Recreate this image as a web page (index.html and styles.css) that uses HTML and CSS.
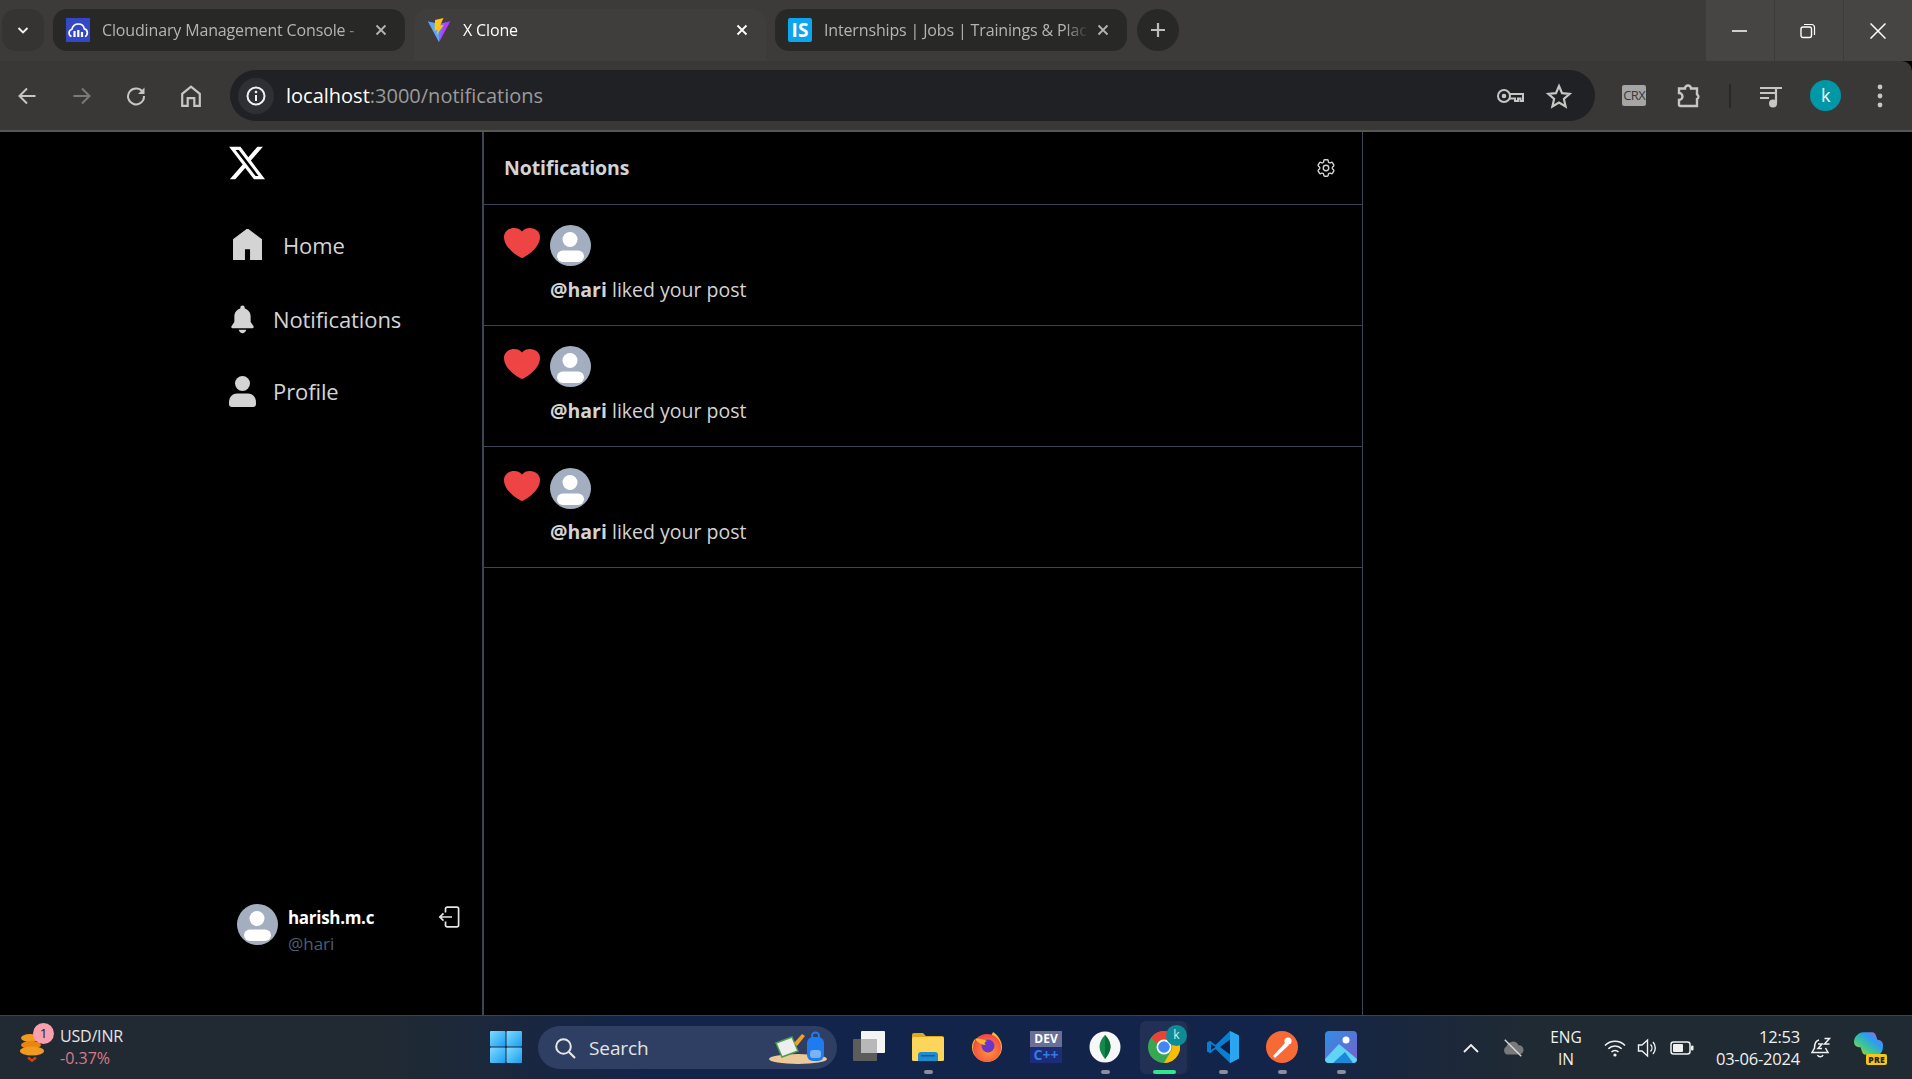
FILE: index.html
```html
<!DOCTYPE html>
<html lang="en">
<head>
<meta charset="utf-8">
<title>X Clone</title>
<link rel="stylesheet" href="styles.css">
</head>
<body>
<svg class="defs" width="0" height="0">
  <symbol id="avatar" viewBox="0 0 41 41"><circle cx="20.5" cy="20.5" r="20.5" fill="#a3afc0"/><circle cx="20" cy="14.5" r="7.5" fill="#fff"/><rect x="7" y="25.5" width="27" height="11.5" rx="5.7" fill="#fff"/></symbol>
  <symbol id="heart" viewBox="2.25 3 19.5 18" preserveAspectRatio="none"><path fill="#ef4444" d="m11.645 20.91-.007-.003-.022-.012a15.247 15.247 0 0 1-.383-.218 25.18 25.18 0 0 1-4.244-3.17C4.688 15.36 2.25 12.174 2.25 8.25 2.25 5.322 4.714 3 7.688 3A5.5 5.5 0 0 1 12 5.052 5.5 5.5 0 0 1 16.313 3c2.973 0 5.437 2.322 5.437 5.25 0 3.925-2.438 7.111-4.739 9.256a25.175 25.175 0 0 1-4.244 3.17 15.247 15.247 0 0 1-.383.219l-.022.012-.007.004-.003.001a.752.752 0 0 1-.704 0l-.003-.001Z"/></symbol>
  <symbol id="close" viewBox="0 0 12 12"><path d="M1.5 1.5l9 9M10.5 1.5l-9 9" fill="none" stroke="currentColor" stroke-width="1.8"/></symbol>
</svg>

<header class="chrome">
  <div class="tabstrip">
    <div class="tab-search"><svg class="ic12" viewBox="0 0 12 12"><path d="M1.5 4l4.5 4.5L10.5 4" fill="none" stroke="#f2f2f2" stroke-width="1.9"/></svg></div>
    <div class="tab">
      <svg class="favicon" viewBox="0 0 24 24"><rect width="24" height="24" fill="#3448c5"/><path d="M5.5 18.5c-3-1-3.6-6 .4-7.300C6.700 7.800 9.500 6 12.500 6c3 0 5.200 2 5.800 4.800 3.700.6 4 6.300.7 7.700" fill="none" stroke="#fff" stroke-width="1.700"/><path d="M8.500 13v6M12.300 12v7M16 14v5" stroke="#fff" stroke-width="2.200"/></svg>
      <span class="tab-title">Cloudinary Management Console -</span>
      <svg class="tab-x" width="12" height="12"><use href="#close"/></svg>
    </div>
    <div class="tab tab-active">
      <svg class="favicon" viewBox="0 0 24 24"><path d="M1 3.500L12 24 23 3.500 12 6z" fill="#7f6cf6"/><path d="M1 3.500L12 24V6z" fill="#5aa7f5"/><path d="M12 24l11-20.500-5 1z" fill="#bd34fe"/><path d="M16.500 0L8 2l-.5 10.500 3-.5-.8 5 7-10-3.500.5z" fill="#ffc517"/></svg>
      <span class="tab-title">X Clone</span>
      <svg class="tab-x" width="12" height="12"><use href="#close"/></svg>
    </div>
    <div class="tab">
      <span class="favicon is-icon">IS</span>
      <span class="tab-title">Internships | Jobs | Trainings &amp; Plac</span>
      <svg class="tab-x" width="12" height="12"><use href="#close"/></svg>
    </div>
    <div class="tab-new"><svg class="ic16" viewBox="0 0 16 16"><path d="M8 1v14M1 8h14" stroke="#bdbdbb" stroke-width="2.200"/></svg></div>
    <div class="winctl">
      <div class="winbtn"><svg class="ic16" viewBox="0 0 16 16"><path d="M0 8h15" stroke="#fff" stroke-width="1.500"/></svg></div>
      <div class="winbtn winbtn-restore"><svg class="ic16" viewBox="0 0 16 16"><rect x="1" y="4" width="10.500" height="10.500" rx="2" fill="none" stroke="#fff" stroke-width="1.400"/><path d="M4 1.500h7.500a3 3 0 0 1 3 3V12" fill="none" stroke="#fff" stroke-width="1.200"/></svg></div>
      <div class="winbtn"><svg class="ic16" viewBox="0 0 16 16"><path d="M.5.500l15 15M15.500.500l-15 15" stroke="#fff" stroke-width="1.500"/></svg></div>
    </div>
  </div>
  <div class="toolbar">
    <div class="tool"><svg class="ic20" viewBox="0 0 20 20"><path d="M18.500 10H2.500M10 2.500L2.500 10l7.500 7.500" fill="none" stroke="#c6c6c4" stroke-width="2"/></svg></div>
    <div class="tool"><svg class="ic20" viewBox="0 0 20 20"><path d="M1.500 10h16M10 2.500l7.500 7.500-7.500 7.500" fill="none" stroke="#7a7a78" stroke-width="2"/></svg></div>
    <div class="tool"><svg class="ic20" viewBox="0 0 20 20"><path d="M17 6.500A8 8 0 1 0 18 10" fill="none" stroke="#c6c6c4" stroke-width="2"/><path d="M18.500 1.500v6.500H12z" fill="#c6c6c4"/></svg></div>
    <div class="tool"><svg class="ic22" viewBox="0 0 20 20"><path d="M2 19V8l8-6.500L18 8v11h-5v-7H7v7z" fill="none" stroke="#c6c6c4" stroke-width="2"/></svg></div>
    <div class="omnibox">
      <div class="info"><svg class="ic20" viewBox="0 0 20 20"><circle cx="10" cy="10" r="8.500" fill="none" stroke="#f2f2f2" stroke-width="2"/><path d="M10 9v6" stroke="#f2f2f2" stroke-width="2"/><circle cx="10" cy="6" r="1.300" fill="#f2f2f2"/></svg></div>
      <div class="url"><span class="url-host">localhost</span>:3000/notifications</div>
      <div class="omni-end">
        <div class="omni-btn"><svg class="key" viewBox="0 0 28 16"><circle cx="8" cy="8" r="6" fill="none" stroke="#c6c6c4" stroke-width="2"/><circle cx="8" cy="8" r="2.300" fill="#c6c6c4"/><path d="M14 6h13v7h-2.500v-2.500H22V13h-3v-2.500h-5" fill="none" stroke="#c6c6c4" stroke-width="2"/></svg></div>
        <div class="omni-btn"><svg class="ic26" viewBox="0 0 24 24"><path d="M12 2.800l2.800 6.600 7.100.6-5.400 4.700 1.600 7-6.100-3.700-6.100 3.700 1.600-7L2.100 10l7.100-.6z" fill="none" stroke="#c6c6c4" stroke-width="2"/></svg></div>
      </div>
    </div>
    <div class="tool tool-first"><span class="crx">CRX</span></div>
    <div class="tool"><svg class="ic26" viewBox="0 0 26 26"><path d="M3 5.500h6a3 3 0 0 1 6 0h6v6a2.500 2.500 0 0 1 0 4.500v7H4.500a1.500 1.500 0 0 1-1.500-1.500V17a3.500 3.500 0 0 0 0-7z" fill="none" stroke="#c6c6c4" stroke-width="2.400"/></svg></div>
    <div class="tool-sep"></div>
    <div class="tool"><svg class="ic26" viewBox="0 0 26 26"><path d="M2 5h15M2 10h15M2 15h9" stroke="#c6c6c4" stroke-width="2"/><path d="M18 20V5h6" fill="none" stroke="#c6c6c4" stroke-width="2.200"/><circle cx="15" cy="20.500" r="4" fill="#c6c6c4"/></svg></div>
    <div class="tool"><span class="profile">k</span></div>
    <div class="tool"><svg class="dots" viewBox="0 0 6 24"><circle cx="3" cy="3" r="2.400" fill="#c6c6c4"/><circle cx="3" cy="12" r="2.400" fill="#c6c6c4"/><circle cx="3" cy="21" r="2.400" fill="#c6c6c4"/></svg></div>
  </div>
</header>

<main class="page">
  <aside class="sidebar">
    <svg class="x-logo" viewBox="1.2 2.2 21.600 19.600"><path fill="#fff" d="M18.244 2.250h3.308l-7.227 8.260 8.502 11.240H16.170l-5.214-6.817L4.990 21.750H1.680l7.730-8.835L1.254 2.250H8.080l4.713 6.231zm-1.161 17.520h1.833L7.084 4.126H5.117z"/></svg>
    <nav class="nav">
      <a class="nav-item nav-home"><svg class="nav-home-icon" viewBox="0 0 28 30"><path fill="#d4d4d4" d="M14 0L0 10.500V30h11V19h6v11h11V10.500z" stroke="#d4d4d4" stroke-linejoin="round"/></svg><span>Home</span></a>
      <a class="nav-item nav-bell"><svg class="nav-bell-icon" viewBox="0 0 24 29"><path fill="#d4d4d4" d="M12 0a2.300 2.300 0 0 0-2.300 2.300v.6C5.900 4 3.500 7.300 3.500 11v6L.5 21.500a1.300 1.300 0 0 0 1 2h21a1.300 1.300 0 0 0 1-2L20.500 17v-6c0-3.700-2.400-7-6.200-8.100v-.6A2.300 2.300 0 0 0 12 0zM8 25.300h8c-.8 2.300-2.200 3.500-4 3.500s-3.200-1.200-4-3.500z"/></svg><span class="nav-label">Notifications</span></a>
      <a class="nav-item nav-profile"><svg class="nav-profile-icon" viewBox="0 0 27 31"><circle cx="13.500" cy="7.500" r="7.500" fill="#d4d4d4"/><path fill="#d4d4d4" d="M0 26.500C0 20.500 4 17.500 8 17.500h11c4 0 8 3 8 9V28a3 3 0 0 1-3 3H3a3 3 0 0 1-3-3z"/></svg><span class="nav-label">Profile</span></a>
    </nav>
    <div class="me">
      <svg class="avatar"><use href="#avatar"/></svg>
      <div class="me-text">
        <div class="me-name">harish.m.c</div>
        <div class="me-handle">@hari</div>
      </div>
      <svg class="logout" viewBox="0 0 22 22"><path d="M7.500 6.500V3a1.800 1.800 0 0 1 1.800-1.800h9.500A1.800 1.800 0 0 1 20.600 3v16a1.800 1.800 0 0 1-1.800 1.800H9.300A1.800 1.800 0 0 1 7.500 19v-3.500M14 11H2M5.500 7.300L1.800 11l3.700 3.700" fill="none" stroke="#e5e5e5" stroke-width="1.700"/></svg>
    </div>
  </aside>

  <section class="feed">
    <div class="feed-head">
      <h1 class="feed-title">Notifications</h1>
      <svg class="gear" viewBox="0 0 24 24"><path fill="none" stroke="#d4d4d4" stroke-width="1.500" d="M9.594 3.940c.09-.542.56-.94 1.110-.94h2.593c.55 0 1.020.398 1.110.94l.213 1.281c.063.374.313.686.645.870.074.040.147.083.220.127.325.196.720.257 1.075.124l1.217-.456a1.125 1.125 0 0 1 1.370.490l1.296 2.247a1.125 1.125 0 0 1-.260 1.431l-1.003.827c-.293.241-.438.613-.430.992a7.723 7.723 0 0 1 0 .255c-.008.378.137.750.430.991l1.004.827c.424.350.534.955.260 1.430l-1.298 2.247a1.125 1.125 0 0 1-1.369.491l-1.217-.456c-.355-.133-.750-.072-1.076.124a6.470 6.470 0 0 1-.220.128c-.331.183-.581.495-.644.869l-.213 1.281c-.090.543-.560.940-1.110.940h-2.594c-.550 0-1.019-.398-1.110-.940l-.213-1.281c-.062-.374-.312-.686-.644-.870a6.520 6.520 0 0 1-.220-.127c-.325-.196-.720-.257-1.076-.124l-1.217.456a1.125 1.125 0 0 1-1.369-.490l-1.297-2.247a1.125 1.125 0 0 1 .260-1.431l1.004-.827c.292-.240.437-.613.430-.991a6.932 6.932 0 0 1 0-.255c.007-.380-.138-.751-.430-.992l-1.004-.827a1.125 1.125 0 0 1-.260-1.430l1.297-2.247a1.125 1.125 0 0 1 1.370-.491l1.216.456c.356.133.751.072 1.076-.124.072-.044.146-.086.220-.128.332-.183.582-.495.644-.869l.214-1.280Z"/><circle cx="12" cy="12" r="3" fill="none" stroke="#d4d4d4" stroke-width="1.500"/></svg>
    </div>
    <article class="note">
      <svg class="heart"><use href="#heart"/></svg>
      <div class="note-body"><svg class="avatar"><use href="#avatar"/></svg><p class="note-text"><b>@hari</b> liked your post</p></div>
    </article>
    <article class="note">
      <svg class="heart"><use href="#heart"/></svg>
      <div class="note-body"><svg class="avatar"><use href="#avatar"/></svg><p class="note-text"><b>@hari</b> liked your post</p></div>
    </article>
    <article class="note note-last">
      <svg class="heart"><use href="#heart"/></svg>
      <div class="note-body"><svg class="avatar"><use href="#avatar"/></svg><p class="note-text"><b>@hari</b> liked your post</p></div>
    </article>
  </section>
</main>

<footer class="taskbar">
  <div class="ticker">
    <div class="coins">
      <svg class="coins-icon" viewBox="0 0 26 30"><ellipse cx="11" cy="5" rx="9" ry="4" fill="#f09a20"/><ellipse cx="12" cy="12" rx="10" ry="4" fill="#e8860f"/><ellipse cx="13" cy="18" rx="12" ry="4.500" fill="#f09a20"/><path d="M9 24.500l4 3 4-3" fill="none" stroke="#c8431a" stroke-width="2.600"/></svg>
      <span class="badge">1</span>
    </div>
    <div class="ticker-text"><div class="ticker-name">USD/INR</div><div class="ticker-val">-0.37%</div></div>
  </div>
  <div class="slot">
    <svg class="ic32" viewBox="0 0 32 32"><defs><linearGradient id="win" x1="0" y1="0" x2="1" y2="1"><stop offset="0" stop-color="#7fdcff"/><stop offset="1" stop-color="#1a9cf0"/></linearGradient></defs><rect x="0" y="0" width="15.500" height="15.500" rx="1" fill="url(#win)"/><rect x="16.500" y="0" width="15.500" height="15.500" rx="1" fill="url(#win)"/><rect x="0" y="16.500" width="15.500" height="15.500" rx="1" fill="url(#win)"/><rect x="16.500" y="16.500" width="15.500" height="15.500" rx="1" fill="url(#win)"/></svg>
  </div>
  <div class="search">
    <svg class="ic22" viewBox="0 0 22 22"><circle cx="9.500" cy="9.500" r="7.300" fill="none" stroke="#e6e6e6" stroke-width="2"/><path d="M15 15l6 6" stroke="#e6e6e6" stroke-width="2.200"/></svg>
    <span class="search-text">Search</span>
    <svg class="search-art" viewBox="0 0 60 34"><ellipse cx="30" cy="28" rx="29" ry="5" fill="#ecc998"/><path d="M8 12l16-6 6 14-16 6z" fill="#eee" stroke="#4a9c50" stroke-width="1.500"/><path d="M26 12l8-9 3 2-8 10z" fill="#f0a030"/><rect x="39" y="6" width="17" height="24" rx="6" fill="#1f7bf0"/><circle cx="47.500" cy="5" r="3.500" fill="none" stroke="#1f7bf0" stroke-width="2"/><rect x="42" y="19" width="11" height="8" rx="3" fill="#7ab4f8"/></svg>
  </div>
  <div class="slot"><svg class="ic32" viewBox="0 0 32 32"><rect x="0" y="8" width="24" height="22" rx="1" fill="#5c5c5c"/><rect x="8" y="0" width="24" height="22" rx="1" fill="#f4f4f4"/><rect x="8" y="8" width="16" height="14" fill="#b8b8b8"/></svg></div>
  <div class="slot slot-open"><svg class="ic32" viewBox="0 0 32 30"><path d="M0 3a2 2 0 0 1 2-2h9l3 3h16a2 2 0 0 1 2 2v3H0z" fill="#e2a81c"/><rect y="5" width="32" height="24" rx="1.500" fill="#fcd55a"/><path d="M6 29v-6a3 3 0 0 1 3-3h14a3 3 0 0 1 3 3v6z" fill="#1f8ccf"/><rect x="9" y="23" width="14" height="1.500" fill="#0f5f9e"/></svg></div>
  <div class="slot"><svg class="ic32" viewBox="0 0 32 32"><defs><radialGradient id="fx" cx=".55" cy=".6" r=".7"><stop offset="0" stop-color="#ff9a2e"/><stop offset="1" stop-color="#f0364f"/></radialGradient></defs><path d="M22 1c5 3 9 9 9 15a15 15 0 1 1-30 0c0-3 1-6 3-8 0 2 1 3 3 4 2-3 6-5 9-5 3-1 5-3 6-6z" fill="#ffb52e"/><circle cx="16" cy="17" r="14" fill="url(#fx)"/><circle cx="17" cy="15" r="6.500" fill="#6b35c9"/><path d="M4 8c3-1 8 0 12 2-3 1-3 3-1 4-4 0-8-2-11-6z" fill="#ffb52e"/></svg></div>
  <div class="slot"><div class="devcpp"><span class="dev-top">DEV</span><span class="dev-bot">C++</span></div></div>
  <div class="slot slot-open"><svg class="ic32" viewBox="0 0 32 32"><circle cx="16" cy="16" r="15.500" fill="#f7f7f7"/><path d="M16 4c4 4 5.500 8 5.500 12S19 24 16 28c-3-4-5.500-8-5.500-12S12 8 16 4z" fill="#128b4a"/><path d="M16 4c4 4 5.500 8 5.500 12S19 24 16 28z" fill="#0b6b37"/></svg></div>
  <div class="slot slot-active">
    <div class="chrome-wrap">
      <svg class="ic32 chrome-logo" viewBox="0 0 32 32"><circle cx="16" cy="16" r="16" fill="#34a853"/><path d="M16 0a16 16 0 0 1 13.900 8H16a8 8 0 0 0-7.300 4.800L3.300 6.700A16 16 0 0 1 16 0z" fill="#ea4335"/><path d="M29.900 8A16 16 0 0 1 16 32l6.900-12A8 8 0 0 0 22 10z" fill="#fbbc04"/><circle cx="16" cy="16" r="7.500" fill="#fff"/><circle cx="16" cy="16" r="5.800" fill="#4285f4"/></svg>
      <span class="chrome-badge">k</span>
    </div>
  </div>
  <div class="slot slot-open"><svg class="ic32" viewBox="0 0 32 32"><path d="M23 0l9 4.500v23L23 32 8.500 18l-5.500 4.300L0 20.500v-9L3 9.700 8.500 14z" fill="#0a7fcf"/><path d="M23 0l9 4.500v23L23 32z" fill="#2aa5f0"/><path d="M23 8.500v15L13 16z" fill="#0f1f45"/><path d="M4 13l4.500 3L4 19z" fill="#0f1f45"/></svg></div>
  <div class="slot slot-open"><svg class="ic32" viewBox="0 0 32 32"><circle cx="16" cy="16" r="16" fill="#f76935"/><path d="M7 25l13-14 3 3-14 13z" fill="#fff"/><circle cx="22" cy="10" r="3.600" fill="#fff"/></svg></div>
  <div class="slot slot-open"><svg class="ic32" viewBox="0 0 32 32"><defs><linearGradient id="ph" x1="0" y1="0" x2="1" y2="1"><stop offset="0" stop-color="#2d8fe6"/><stop offset="1" stop-color="#7a5fc9"/></linearGradient></defs><rect width="32" height="32" rx="4" fill="url(#ph)"/><circle cx="21" cy="9" r="3.500" fill="#fff"/><path d="M0 28L14 13l18 15v0a4 4 0 0 1-4 4H4a4 4 0 0 1-4-4z" fill="#5fd4f4"/><path d="M8 32l12-11 8 11z" fill="#1a8ad8"/></svg></div>
  <div class="tray">
    <div class="tray-item tray-chev"><svg class="ic16" viewBox="0 0 16 16"><path d="M1 12l7-7 7 7" fill="none" stroke="#f0f0f0" stroke-width="1.800"/></svg></div>
    <div class="tray-item tray-cloud"><svg class="ic22" viewBox="0 0 24 24"><path d="M5 19a5 5 0 0 1 0-9 7 7 0 0 1 13-1 5 5 0 0 1 1 10z" fill="#77797b"/><path d="M3 3l18 18" stroke="#d8d8d8" stroke-width="1.600"/></svg></div>
    <div class="tray-lang"><div>ENG</div><div>IN</div></div>
    <div class="tray-item tray-wifi"><svg class="ic22" viewBox="0 0 22 18"><path d="M1 6.500a14 14 0 0 1 20 0M4.300 9.800a9.500 9.500 0 0 1 13.400 0M7.500 13a5 5 0 0 1 7 0" fill="none" stroke="#f2f2f2" stroke-width="1.600"/><circle cx="11" cy="16" r="1.600" fill="#f2f2f2"/></svg></div>
    <div class="tray-item tray-vol"><svg class="ic22" viewBox="0 0 22 20"><path d="M1.500 7v6h3.500l5.500 5V2L5 7z" fill="none" stroke="#f2f2f2" stroke-width="1.400"/><path d="M13.500 6.500a5 5 0 0 1 0 7M16 4a9 9 0 0 1 0 12" fill="none" stroke="#f2f2f2" stroke-width="1.400"/></svg></div>
    <div class="tray-item tray-bat"><svg class="bat" viewBox="0 0 24 14"><rect x="1" y="1" width="19" height="12" rx="2.500" fill="none" stroke="#f2f2f2" stroke-width="1.500"/><rect x="3" y="3" width="10" height="8" rx="1" fill="#f2f2f2"/><rect x="21" y="4.500" width="2.500" height="5" rx="1" fill="#f2f2f2"/></svg></div>
    <div class="clock"><div>12:53</div><div>03-06-2024</div></div>
    <div class="tray-item tray-bell"><svg class="ic22" viewBox="0 0 22 22"><path d="M9 3C5 4 4.500 7 4.500 11L2 15.500h16L15.500 11M7.500 18a3 3 0 0 0 5.500 0" fill="none" stroke="#f0f0f0" stroke-width="1.500"/><path d="M8 7h4L8 11.500h4M14.500 1.500h5L14.500 7h5" fill="none" stroke="#f0f0f0" stroke-width="1.500"/></svg></div>
    <div class="tray-item tray-copilot">
      <div class="copilot">
        <svg class="copilot-art" viewBox="0 0 32 26"><defs><linearGradient id="cp" x1="0" y1="1" x2="1" y2="0"><stop offset="0" stop-color="#f5c518"/><stop offset=".35" stop-color="#3fc98c"/><stop offset=".65" stop-color="#2a9df4"/><stop offset="1" stop-color="#d354c4"/></linearGradient></defs><path d="M10 0h9c3 0 4 2 5 5l1 3c4 0 6 3 6 6 0 5-2 10-6 10H13c-3 0-4-2-5-5l-1-3c-4 0-7-2-7-6C0 5 5 0 10 0z" fill="url(#cp)"/></svg>
        <span class="pre">PRE</span>
      </div>
    </div>
  </div>
</footer>
</body>
</html>
```
FILE: styles.css
```css
* { box-sizing: border-box; }
html, body { margin: 0; height: 100%; }
body {
  display: flex;
  flex-direction: column;
  height: 100vh;
  overflow: hidden;
  background: #000;
  font-family: "Open Sans", "Noto Sans", sans-serif;
  color: #d4d4d4;
}
.defs { position: absolute; }

.ic12 { width: 12px; height: 12px; }
.ic16 { width: 16px; height: 16px; }
.ic20 { width: 20px; height: 20px; }
.ic22 { width: 22px; height: 22px; }
.ic26 { width: 26px; height: 26px; }
.ic32 { width: 32px; height: 32px; }

/* browser chrome */
.chrome { flex: none; height: 132px; display: flex; flex-direction: column; border-bottom: 2px solid #565654; }
.tabstrip { height: 61px; background: #3c3b39; display: flex; padding: 9px 0 0 2px; flex: none; }
.tab-search { width: 42px; height: 42px; border-radius: 14px; background: #353432; display: flex; align-items: center; justify-content: center; }
.tab {
  width: 352px; height: 42px; margin-left: 9px; padding: 0 18px 0 13px;
  background: #282826; border-radius: 14px;
  display: flex; align-items: center;
  color: #b4b4b2; font-size: 16px; letter-spacing: -.15px;
}
.tab-active {
  height: 52px; background: #3f3e3c; color: #fff; border-radius: 14px 14px 0 0;
  padding-bottom: 10px;
}
.favicon { width: 24px; height: 24px; flex: none; }
.is-icon { background: #0ca5ee; color: #fff; font-weight: 700; font-size: 19px; line-height: 24px; text-align: center; letter-spacing: 0; border-radius: 2px; }
.tab-title {
  flex: 1; margin: 0 8px 0 12px; white-space: nowrap; overflow: hidden;
  -webkit-mask-image: linear-gradient(to left, transparent, #000 24px);
  mask-image: linear-gradient(to left, transparent, #000 24px);
}
.tab-x { flex: none; color: #b4b4b2; }
.tab-active .tab-x { color: #fff; }
.tab-new { width: 42px; height: 42px; margin-left: 10px; border-radius: 50%; background: #282826; display: flex; align-items: center; justify-content: center; }
.winctl { margin: -9px 0 0 auto; display: flex; height: 61px; }
.winbtn { width: 69px; background: #464543; border-left: 1px solid #3c3b39; display: flex; align-items: center; justify-content: center; }
.winbtn-restore { padding-right: 2px; }

.toolbar { flex: 1; background: #393836; display: flex; align-items: center; border-top-right-radius: 10px; }
.tool { width: 54.500px; height: 40px; flex: none; display: flex; align-items: center; justify-content: center; }
.tool-first { margin-left: 12px; }
.omnibox { width: 1365px; height: 51px; margin-left: 12px; background: #202124; border-radius: 26px; display: flex; align-items: center; flex: none; }
.info { width: 36px; height: 36px; margin-left: 8px; background: #2f3033; border-radius: 50%; display: flex; align-items: center; justify-content: center; flex: none; }
.url { margin-left: 12px; font-size: 20px; color: #9b9b9b; white-space: nowrap; }
.url-host { color: #fff; }
.omni-end { margin-left: auto; display: flex; padding-right: 12px; }
.omni-btn { width: 49px; display: flex; align-items: center; justify-content: center; }
.key { width: 28px; height: 16px; }
.crx { width: 24px; height: 21px; background: #a5a5a5; color: #3a3a3a; font-size: 13px; line-height: 21px; text-align: center; border-radius: 2px; letter-spacing: -.6px; }
.tool-sep { width: 2px; height: 24px; margin: 0 13px; background: #282826; flex: none; }
.profile { width: 31px; height: 31px; border-radius: 50%; background: #0097a7; color: #fff; font-size: 18px; line-height: 30px; text-align: center; }
.dots { width: 6px; height: 24px; }

/* page */
.page { flex: 1; min-height: 0; display: flex; padding-left: 220px; background: #000; }
.sidebar { width: 264px; flex: none; padding: 14px 0 0 9px; border-right: 2px solid #3a4558; display: flex; flex-direction: column; }
.x-logo { width: 36px; height: 34px; flex: none; }
.nav { display: flex; flex-direction: column; }
.nav-item { display: flex; align-items: center; color: #d4d4d4; font-size: 22px; letter-spacing: -.1px; }
.nav-label { padding-bottom: 2px; }
.nav-home { margin: 49px 0 0 4px; gap: 21px; height: 31px; }
.nav-home-icon { width: 29px; height: 31px; }
.nav-bell { margin: 45px 0 0 2px; gap: 19px; height: 29px; }
.nav-bell-icon { width: 23px; height: 29px; }
.nav-profile { margin: 42px 0 0 0; gap: 17px; height: 31px; }
.nav-profile-icon { width: 27px; height: 31px; }
.me { margin: auto 0 58px 8px; display: flex; align-items: flex-start; }
.avatar { width: 41px; height: 41px; flex: none; display: block; }
.me-text { margin: 2px 0 0 10px; }
.me-name { color: #fff; font-weight: 700; font-size: 17px; line-height: 24px; letter-spacing: -.3px; }
.me-handle { color: #4b5e78; font-size: 17px; line-height: 26px; margin-top: 1px; }
.logout { width: 22px; height: 22px; margin: 2px 0 0 64px; }

.feed { width: 879px; flex: none; border-right: 1px solid #3a4558; display: flex; flex-direction: column; }
.feed-head { height: 73px; flex: none; padding: 0 25px 0 20px; display: flex; align-items: center; justify-content: space-between; border-bottom: 1px solid #3a4558; }
.feed-title { margin: -2px 0 0 0; font-size: 19.500px; font-weight: 700; color: #d4d4d4; letter-spacing: -.1px; }
.gear { width: 22px; height: 22px; }
.note { height: 121px; flex: none; padding: 20px 0 0 20px; display: flex; border-bottom: 1px solid #3a4558; }
.note-last { padding-top: 21px; }
.heart { width: 36px; height: 30px; margin-top: 3px; flex: none; }
.note-body { margin-left: 10px; }
.note-text { margin: 10px 0 0 0; font-size: 19.500px; line-height: 28px; color: #d4d4d4; }
.note-last .note-text { margin-top: 9px; }
.note-text b { font-weight: 700; }

/* taskbar */
.taskbar {
  flex: none; height: 64px; display: flex; align-items: center;
  background: linear-gradient(to right, #212a33 0, #212a33 20%, #12244a 34%, #12244a 66%, #202a33 80%, #202a33 100%);
  border-top: 1px solid #3c434c;
  color: #f0f0f0;
}
.ticker { width: 476px; flex: none; display: flex; align-items: center; padding-left: 19px; }
.coins { position: relative; width: 26px; height: 30px; }
.coins-icon { width: 26px; height: 30px; display: block; }
.badge { position: absolute; left: 14px; top: -10px; width: 21px; height: 21px; border-radius: 50%; background: #f9a0ae; color: #222; font-size: 13.500px; line-height: 21px; text-align: center; }
.ticker-text { margin: -2px 0 0 15px; font-size: 16px; line-height: 22px; }
.ticker-name { color: #e6e6e6; letter-spacing: -.2px; }
.ticker-val { color: #d87b88; }
.slot { position: relative; width: 59px; height: 100%; flex: none; display: flex; align-items: center; justify-content: center; padding-bottom: 1px; }
.slot-open::after { content: ""; position: absolute; left: 25px; bottom: 5px; width: 9px; height: 4px; border-radius: 2px; background: #8a8f99; }
.slot-active::before { content: ""; position: absolute; left: 5px; top: 5px; width: 47px; height: 53px; border-radius: 6px; background: #223056; box-shadow: 4px 0 0 -1px #1a2647; }
.slot-active::after { content: ""; position: absolute; left: 18px; bottom: 5px; width: 23px; height: 4px; border-radius: 2px; background: #2fe88a; }
.search { width: 299px; height: 43px; margin: 0 2.500px 0 3px; flex: none; padding: 0 16px; border-radius: 22px; background: #2f3f63; display: flex; align-items: center; }
.search-text { margin-left: 13px; font-size: 19px; color: #e4e4e4; letter-spacing: -.1px; }
.search-art { margin-left: auto; margin-right: -8px; width: 62px; height: 34px; }
.devcpp { width: 32px; height: 32px; background: #1c2c78; display: flex; flex-direction: column; align-items: center; overflow: hidden; }
.dev-top { width: 100%; background: #6a6f96; color: #fff; font-size: 12px; font-weight: 700; line-height: 16px; text-align: center; }
.dev-bot { color: #2f7de0; font-size: 14px; font-weight: 700; line-height: 16px; }
.chrome-wrap { position: relative; width: 32px; height: 32px; }
.chrome-logo { display: block; }
.chrome-badge { position: absolute; left: 18px; top: -6px; width: 21px; height: 21px; border-radius: 50%; background: #0d8c96; color: #e6e6e6; font-size: 12px; line-height: 20px; text-align: center; }
.tray { margin-left: auto; height: 100%; padding-right: 9px; display: flex; align-items: center; }
.tray-item { height: 100%; flex: none; display: flex; align-items: center; justify-content: center; }
.tray-chev, .tray-cloud { width: 42px; }
.tray-lang { width: 64px; font-size: 15.500px; line-height: 22px; text-align: center; }
.tray-wifi { width: 34px; }
.tray-vol { width: 32px; }
.tray-bat { width: 36px; }
.bat { width: 24px; height: 14px; }
.clock { width: 105px; padding-right: 5px; text-align: right; font-size: 16.500px; line-height: 22px; letter-spacing: -.2px; white-space: nowrap; }
.tray-bell { width: 32px; }
.tray-copilot { width: 66px; }
.copilot { position: relative; width: 32px; height: 32px; }
.copilot-art { width: 30px; height: 25px; display: block; }
.pre { position: absolute; right: -1px; bottom: -1px; padding: 0 2px; background: #f5c518; color: #222; font-size: 8.500px; font-weight: 800; line-height: 11px; letter-spacing: .3px; border-radius: 2px; }
```
